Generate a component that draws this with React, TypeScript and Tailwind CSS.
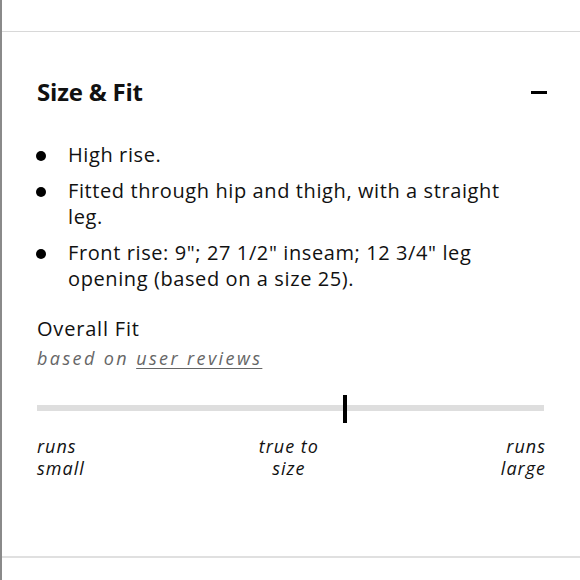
export default function App() {
  const bullets = [
    "High rise.",
    "Fitted through hip and thigh, with a straight leg.",
    'Front rise: 9"; 27 1/2" inseam; 12 3/4" leg opening (based on a size 25).',
  ];

  return (
    <div className="h-[580px] w-[580px] overflow-hidden bg-white border-l-2 border-[#8a8a8a] font-['Open_Sans','Noto_Sans',sans-serif] text-[#111]">
      <div className="h-[31px]" />
      <div className="border-t border-[#d8d8d8]">
        {/* header */}
        <div className="flex items-center justify-between pl-[35px] pr-[33px] pt-[44px]">
          <h2 className="text-[24px] font-bold leading-[32px] tracking-[-0.2px]">Size &amp; Fit</h2>
          <span className="block h-[3px] w-[16px] bg-black" />
        </div>

        {/* bullets */}
        <ul className="mt-[34px] flex flex-col gap-[10px] pl-[34px] pr-[60px]">
          {bullets.map((b, i) => (
            <li key={i} className="flex text-[20px] leading-[26px] tracking-[0.6px]">
              <span className="mr-[22px] mt-[9px] block h-[10px] w-[10px] shrink-0 rounded-full bg-black" />
              <span>{b}</span>
            </li>
          ))}
        </ul>

        {/* overall fit */}
        <div className="mt-[23px] pl-[35px] pr-[34px]">
          <div className="text-[20px] leading-[28px] tracking-[0.8px]">Overall Fit</div>
          <div className="mt-[2px] text-[18px] italic leading-[26px] tracking-[2.4px] text-[#666]">
            based on <span className="underline decoration-1 underline-offset-[3px]">user reviews</span>
          </div>

          <div className="relative mt-[24px] h-[28px]">
            <div className="absolute left-0 right-[2px] top-[10px] h-[6px] bg-[#dedede]" />
            <div className="absolute left-[306px] top-0 h-[28px] w-[4px] bg-black" />
          </div>

          <div className="mt-[12px] flex justify-between text-[18px] italic leading-[22px] tracking-[1px]">
            <div className="text-left">runs<br />small</div>
            <div className="pr-[8px] text-center">true to<br />size</div>
            <div className="text-right">runs<br />large</div>
          </div>
        </div>
      </div>
      <div className="mt-[77px] border-t-2 border-[#e0e0e0]" />
    </div>
  );
}
